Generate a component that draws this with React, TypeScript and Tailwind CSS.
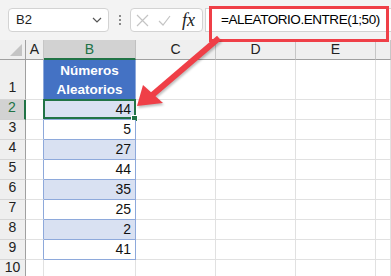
const values = [44, 5, 27, 44, 35, 25, 2, 41];
const cols = ["A", "B", "C", "D", "E", ""];

function RowHead({ n, active }: { n: number; active?: boolean }) {
  return (
    <div
      className={
        active
          ? "flex items-end justify-center pb-[1px] bg-[#d2d2d2] text-[#217346] border-b border-[#d0d0d0] border-r-2 border-r-[#217346] text-[14px]"
          : "flex items-end justify-center pb-[1px] bg-[#efefef] text-[#222] border-b border-[#d6d6d6] border-r border-r-[#a0a0a0] text-[14px]"
      }
    >
      {n}
    </div>
  );
}

function Empty({ blue }: { blue?: boolean }) {
  return (
    <div
      className={
        blue
          ? "border-b border-[#e1e1e1] border-r border-r-[#8ea9db]"
          : "border-b border-r border-[#e1e1e1]"
      }
    />
  );
}

export default function App() {
  return (
    <div className="relative w-[391px] h-[276px] overflow-hidden bg-white font-['Liberation_Sans',sans-serif]">
      {/* barra de fórmulas */}
      <div className="h-[40px] bg-[#f3f3f3] flex items-start pt-[8px] pl-[8px]">
        <div className="w-[101px] h-[24px] bg-white border border-[#d3d3d3] rounded-[4px] flex items-center justify-between pl-[7px] pr-[6px]">
          <span className="text-[13px] text-[#222]">B2</span>
          <svg width="10" height="6" viewBox="0 0 10 6">
            <polyline points="1,1 5,5 9,1" fill="none" stroke="#555" strokeWidth="1.2" />
          </svg>
        </div>
        <div className="w-[21px] h-[24px] flex flex-col items-center justify-center gap-[2px]">
          <span className="w-[2px] h-[2px] bg-[#8a8a8a]" />
          <span className="w-[2px] h-[2px] bg-[#8a8a8a]" />
          <span className="w-[2px] h-[2px] bg-[#8a8a8a]" />
        </div>
        <div className="w-[73px] h-[24px] bg-white border border-[#d3d3d3] rounded-[4px] flex items-center pl-[5px] gap-[9px]">
          <svg width="13" height="13" viewBox="0 0 13 13">
            <path d="M1 1 L12 12 M12 1 L1 12" stroke="#c4c4c4" strokeWidth="1.2" />
          </svg>
          <svg width="13" height="13" viewBox="0 0 13 13">
            <polyline points="1,7 5,11 12,2" fill="none" stroke="#c4c4c4" strokeWidth="1.2" />
          </svg>
          <span className="ml-[2px] text-[18px] text-[#222] font-['Liberation_Serif',serif] italic leading-none">
            fx
          </span>
        </div>
        <div className="flex-1 ml-[2px] h-[24px] bg-white border-y border-l border-[#d3d3d3] flex items-center pl-[15px]">
          <span className="text-[13.5px] tracking-[-0.45px] text-[#000]">=ALEATORIO.ENTRE(1;50)</span>
        </div>
      </div>

      {/* hoja */}
      <div className="grid grid-cols-[26px_18px_92px_80px_80px_80px_1fr] grid-rows-[20px_40px_repeat(9,20px)]">
        <div className="bg-[#efefef] border-r border-b border-[#a0a0a0] flex items-end justify-end pr-[3px] pb-[3px]">
          <svg width="12" height="12" viewBox="0 0 12 12">
            <polygon points="12,0 12,12 0,12" fill="#c4c4c4" />
          </svg>
        </div>
        {cols.map((c) =>
          c === "B" ? (
            <div
              key={c}
              className="bg-[#d2d2d2] text-[#217346] border-r border-r-[#c0c0c0] border-b-2 border-b-[#217346] flex items-center justify-center text-[14px]"
            >
              {c}
            </div>
          ) : (
            <div
              key={c || "F"}
              className="bg-[#efefef] text-[#222] border-r border-r-[#c6c6c6] border-b border-b-[#a0a0a0] flex items-center justify-center text-[14px]"
            >
              {c}
            </div>
          )
        )}

        {/* fila 1 */}
        <RowHead n={1} />
        <Empty blue />
        <div className="bg-[#4472c4] border-r border-b border-[#8ea9db] flex flex-col items-center justify-end text-white font-bold text-[13.5px] leading-[19px]">
          <span>Números</span>
          <span>Aleatorios</span>
        </div>
        <Empty />
        <Empty />
        <Empty />
        <Empty />

        {values.map((v, i) => {
          const row = i + 2;
          const shaded = i % 2 === 0;
          return [
            <RowHead key={`h${row}`} n={row} active={row === 2} />,
            <Empty key={`a${row}`} blue />,
            <div
              key={`b${row}`}
              className={
                (shaded ? "bg-[#d9e1f2] " : "bg-white ") +
                "relative border-r border-b border-[#8ea9db] flex items-end justify-end pr-[4px] text-[14px] text-[#111] leading-[19px]"
              }
            >
              {v}
              {row === 2 && (
                <>
                  <div className="absolute -left-[1px] -top-[1px] -right-[1px] bottom-0 border-2 border-[#217346]" />
                  <div className="absolute -right-[3px] -bottom-[3px] w-[7px] h-[7px] bg-[#217346] border border-white" />
                </>
              )}
            </div>,
            <Empty key={`c${row}`} />,
            <Empty key={`d${row}`} />,
            <Empty key={`e${row}`} />,
            <Empty key={`f${row}`} />,
          ];
        })}

        {/* fila 10 */}
        <RowHead n={10} />
        <Empty />
        <Empty />
        <Empty />
        <Empty />
        <Empty />
        <Empty />
      </div>

      {/* anotación */}
      <div className="absolute left-[209px] top-[6px] w-[180px] h-[36px] border-[3px] border-[#ef3f47]" />
      <svg
        className="absolute left-0 top-0 pointer-events-none drop-shadow-[1px_2px_1px_rgba(0,0,0,0.25)]"
        width="391"
        height="276"
        viewBox="0 0 391 276"
      >
        <line x1="219" y1="38" x2="150" y2="97" stroke="#ef3f47" strokeWidth="6" />
        <polygon points="137,106 143,85 163,103" fill="#ef3f47" />
      </svg>
    </div>
  );
}
